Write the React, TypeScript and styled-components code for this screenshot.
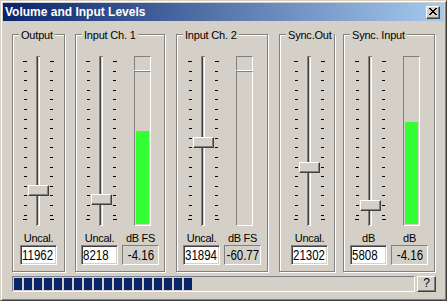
import React from 'react';
import styled, { createGlobalStyle } from 'styled-components';

const FACE = '#d4d0c8';
const FONT = '"Liberation Sans", Arial, sans-serif';

const GlobalStyle = createGlobalStyle`
  html, body {
    margin: 0;
    padding: 0;
    background: ${FACE};
  }
  body {
    font-family: ${FONT};
    color: #000;
  }
`;

// window chrome
const Window = styled.div`
  box-sizing: border-box;
  width: 447px;
  height: 301px;
  padding: 2px;
  background: ${FACE};
  border: 1px solid;
  border-color: ${FACE} #404040 #404040 ${FACE};
  box-shadow: inset 1px 1px 0 #fff, inset -1px -1px 0 #808080;
  display: flex;
  flex-direction: column;
`;

const TitleBar = styled.div`
  height: 18px;
  flex: none;
  display: flex;
  align-items: center;
  justify-content: space-between;
  padding: 0 4px 0 2px;
  background: linear-gradient(to right, #0a246a, #a6caf0);
  color: #fff;
  font: bold 12px/18px ${FONT};
`;

const CloseButton = styled.div`
  box-sizing: border-box;
  width: 14px;
  height: 13px;
  background: ${FACE};
  border: 1px solid;
  border-color: #fff #404040 #404040 #fff;
  box-shadow: inset -1px -1px 0 #808080;
  display: flex;
  align-items: center;
  justify-content: center;
  svg {
    display: block;
    margin: 0 1px 1px 0;
  }
`;

const Body = styled.div`
  flex: 1;
  display: flex;
  flex-direction: column;
  padding: 13px 8px 0 9px;
`;

const GroupRow = styled.div`
  display: flex;
`;

const Group = styled.div<{ $w: number; $ml: number; $pl?: number }>`
  position: relative;
  box-sizing: border-box;
  width: ${(p) => p.$w}px;
  height: 238px;
  margin-left: ${(p) => p.$ml}px;
  padding: 21px 0 6px ${(p) => p.$pl || 0}px;
  border: 1px solid #808080;
  box-shadow: 1px 1px 0 #fff, inset 1px 1px 0 #fff;
  display: flex;
  justify-content: center;
  gap: 4px;
`;

const Legend = styled.span`
  position: absolute;
  top: -6px;
  left: 6px;
  padding: 0 2px;
  background: ${FACE};
  font-size: 11px;
  line-height: 13px;
  letter-spacing: -0.2px;
  white-space: nowrap;
`;

const Column = styled.div`
  width: 37px;
  display: flex;
  flex-direction: column;
  align-items: center;
`;

const Display = styled.div<{ $nudge?: boolean }>`
  height: 170px;
  display: flex;
  flex-direction: column;
  margin-left: ${(p) => (p.$nudge ? 4 : 0)}px;
`;

// trackbar
const SliderBox = styled.div`
  position: relative;
  width: 31px;
  height: 170px;
  svg {
    display: block;
  }
`;

const Thumb = styled.div`
  position: absolute;
  left: 5px;
  box-sizing: border-box;
  width: 21px;
  height: 11px;
  background: ${FACE};
  border: 1px solid;
  border-color: #fff #404040 #404040 #fff;
  box-shadow: inset -1px -1px 0 #808080;
`;

// level meter
const PeakCell = styled.div`
  box-sizing: border-box;
  width: 17px;
  height: 15px;
  border: 1px solid;
  border-color: #808080 #fff #fff #808080;
`;

const Meter = styled.div`
  box-sizing: border-box;
  width: 17px;
  flex: 1;
  padding: 1px;
  border: 1px solid;
  border-color: #808080 #fff #fff #808080;
  display: flex;
  flex-direction: column;
  justify-content: flex-end;
`;

const MeterFill = styled.div`
  background: #33ff33;
`;

const Caption = styled.div`
  margin-top: 6px;
  font-size: 11px;
  line-height: 13px;
  letter-spacing: -0.3px;
  white-space: nowrap;
`;

const Field = styled.div<{ $readOnly?: boolean }>`
  box-sizing: border-box;
  width: 37px;
  height: 20px;
  padding-left: ${(p) => (p.$readOnly ? 0 : 1)}px;
  border: 1px solid;
  border-color: #808080 #fff #fff #808080;
  background: ${(p) => (p.$readOnly ? FACE : '#fff')};
  box-shadow: ${(p) => (p.$readOnly ? 'none' : `inset 1px 1px 0 #404040, inset -1px -1px 0 ${FACE}`)};
  display: flex;
  justify-content: ${(p) => (p.$readOnly ? 'center' : 'flex-start')};
  overflow: hidden;
`;

// MS Sans Serif digits are tall and narrow: squeeze a larger face horizontally
const FieldText = styled.span<{ $readOnly?: boolean }>`
  flex: none;
  font-size: 14px;
  line-height: 18px;
  white-space: nowrap;
  transform: scaleX(0.82);
  transform-origin: ${(p) => (p.$readOnly ? 'center' : 'left')} center;
`;

// status row
const StatusRow = styled.div`
  display: flex;
  gap: 2px;
  margin-top: 4px;
`;

const Progress = styled.div`
  box-sizing: border-box;
  flex: 1;
  height: 16px;
  padding: 1px;
  border: 1px solid;
  border-color: #808080 #fff #fff #808080;
  display: flex;
  gap: 2px;
`;

const Block = styled.div`
  width: 8px;
  height: 12px;
  background: #0a246a;
`;

const HelpButton = styled.div`
  box-sizing: border-box;
  width: 19px;
  height: 16px;
  background: ${FACE};
  border: 1px solid;
  border-color: #fff #404040 #404040 #fff;
  box-shadow: inset -1px -1px 0 #808080;
  font-size: 12px;
  line-height: 13px;
  text-align: center;
`;

const TICKS = Array.from({ length: 17 }, (_, i) => 5 + Math.round(i * 9.6)).concat(163);

const Trackbar: React.FC<{ pos: number }> = ({ pos }) => (
  <SliderBox>
    <svg width="31" height="170" shapeRendering="crispEdges">
      {TICKS.map((y, i) => {
        const end = i === 0 || i === TICKS.length - 1;
        return (
          <g key={i} fill="#000">
            <rect x={end ? 0 : 1} y={y} width={end ? 4 : 3} height={1} />
            <rect x={27} y={y} width={end ? 4 : 3} height={1} />
          </g>
        );
      })}
      <rect x={13} y={0} width={1} height={170} fill="#808080" />
      <rect x={14} y={1} width={1} height={168} fill="#404040" />
      <rect x={16} y={0} width={1} height={170} fill="#fff" />
      <rect x={13} y={0} width={4} height={1} fill="#808080" />
      <rect x={14} y={169} width={3} height={1} fill="#fff" />
    </svg>
    <Thumb style={{ top: Math.round(pos * 159) }} />
  </SliderBox>
);

type Col =
  | { kind: 'slider'; pos: number; label: string; value: string }
  | { kind: 'meter'; level: number; peak: boolean; label: string; value: string };

interface GroupDef {
  title: string;
  width: number;
  ml: number;
  pl?: number;
  cols: Col[];
}

const GROUPS: GroupDef[] = [
  { title: 'Output', width: 53, ml: 0, cols: [{ kind: 'slider', pos: 0.811, label: 'Uncal.', value: '11962' }] },
  {
    title: 'Input Ch. 1',
    width: 90,
    ml: 10,
    cols: [
      { kind: 'slider', pos: 0.868, label: 'Uncal.', value: '8218' },
      { kind: 'meter', level: 0.617, peak: true, label: 'dB FS', value: '-4.16' },
    ],
  },
  {
    title: 'Input Ch. 2',
    width: 92,
    ml: 11,
    cols: [
      { kind: 'slider', pos: 0.509, label: 'Uncal.', value: '31894' },
      { kind: 'meter', level: 0, peak: true, label: 'dB FS', value: '-60.77' },
    ],
  },
  { title: 'Sync.Out', width: 56, ml: 11, pl: 5, cols: [{ kind: 'slider', pos: 0.667, label: 'Uncal.', value: '21302' }] },
  {
    title: 'Sync. Input',
    width: 92,
    ml: 8,
    cols: [
      { kind: 'slider', pos: 0.906, label: 'dB', value: '5808' },
      { kind: 'meter', level: 0.617, peak: false, label: 'dB', value: '-4.16' },
    ],
  },
];

const CloseGlyph = () => (
  <svg width="8" height="7" shapeRendering="crispEdges" fill="#000">
    <rect x={0} y={0} width={2} height={1} />
    <rect x={6} y={0} width={2} height={1} />
    <rect x={1} y={1} width={2} height={1} />
    <rect x={5} y={1} width={2} height={1} />
    <rect x={2} y={2} width={4} height={1} />
    <rect x={3} y={3} width={2} height={1} />
    <rect x={2} y={4} width={4} height={1} />
    <rect x={1} y={5} width={2} height={1} />
    <rect x={5} y={5} width={2} height={1} />
    <rect x={0} y={6} width={2} height={1} />
    <rect x={6} y={6} width={2} height={1} />
  </svg>
);

const App: React.FC = () => {
  const dual = (g: GroupDef) => g.cols.length > 1;

  return (
    <>
      <GlobalStyle />
      <Window>
        <TitleBar>
          <span>Volume and Input Levels</span>
          <CloseButton>
            <CloseGlyph />
          </CloseButton>
        </TitleBar>

        <Body>
          <GroupRow>
            {GROUPS.map((g) => (
              <Group key={g.title} $w={g.width} $ml={g.ml} $pl={g.pl}>
                <Legend>{g.title}</Legend>
                {g.cols.map((c, i) => {
                  const ro = c.kind === 'meter';
                  return (
                    <Column key={i}>
                      <Display $nudge={dual(g)}>
                        {c.kind === 'slider' ? (
                          <Trackbar pos={c.pos} />
                        ) : (
                          <>
                            {c.peak && <PeakCell />}
                            <Meter>
                              <MeterFill style={{ height: `${c.level * 100}%` }} />
                            </Meter>
                          </>
                        )}
                      </Display>
                      <Caption>{c.label}</Caption>
                      <Field $readOnly={ro}>
                        <FieldText $readOnly={ro}>{c.value}</FieldText>
                      </Field>
                    </Column>
                  );
                })}
              </Group>
            ))}
          </GroupRow>

          <StatusRow>
            <Progress>
              {Array.from({ length: 18 }, (_, i) => (
                <Block key={i} />
              ))}
            </Progress>
            <HelpButton>?</HelpButton>
          </StatusRow>
        </Body>
      </Window>
    </>
  );
};

export default App;
